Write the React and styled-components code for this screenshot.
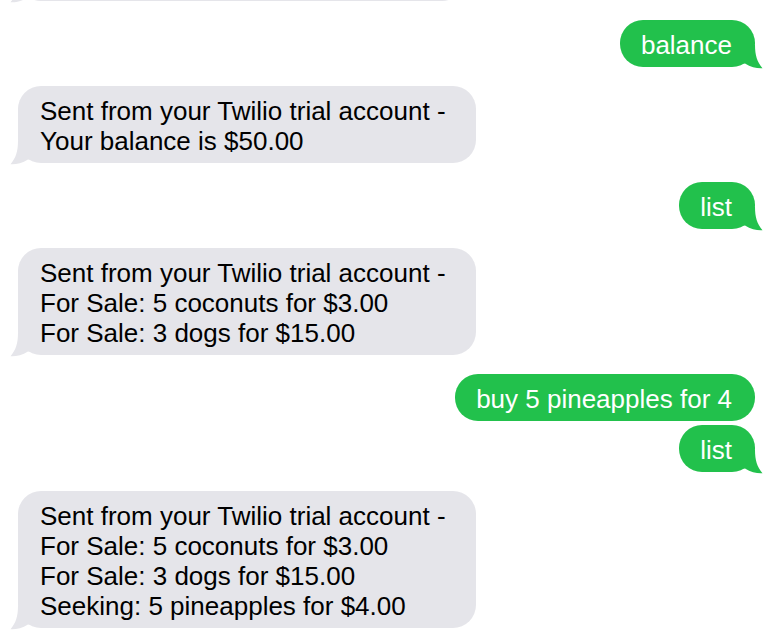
import React from "react";
import styled, { createGlobalStyle } from "styled-components";

const Global = createGlobalStyle`
  html, body { margin: 0; padding: 0; background: #ffffff; }
  body { width: 774px; height: 632px; overflow: hidden; }
`;

const Thread = styled.div`
  display: flex;
  flex-direction: column;
  margin-top: -59px;
  font-family: "Liberation Sans", Arial, Helvetica, sans-serif;
`;

const Row = styled.div`
  display: flex;
  justify-content: ${(p) => (p.$mine ? "flex-end" : "flex-start")};
  margin-top: ${(p) => p.$gap}px;
  padding: ${(p) => (p.$mine ? "0 19px 0 0" : "0 0 0 18px")};
`;

const Bubble = styled.div`
  position: relative;
  box-sizing: border-box;
  width: ${(p) => (p.$width ? `${p.$width}px` : "auto")};
  min-height: ${(p) => (p.$height ? `${p.$height}px` : "0")};
  background: ${(p) => (p.$mine ? "#22c14c" : "#e5e5ea")};
  color: ${(p) => (p.$mine ? "#ffffff" : "#000000")};
  font-size: 26px;
  line-height: 30px;
  padding: ${(p) => (p.$mine ? "10px 23px 7px 21px" : "10px 30px 7px 22px")};
  border-radius: 23px;
  white-space: nowrap;
`;

const TailSvg = styled.svg`
  position: absolute;
  bottom: -2px;
  ${(p) => (p.$mine ? "right: -8px;" : "left: -8px; transform: scaleX(-1);")}
  width: 24px;
  height: 24px;
  overflow: visible;
`;

function Tail({ mine }) {
  return (
    <TailSvg $mine={mine} viewBox="0 0 24 24" aria-hidden="true">
      <path
        d="M0 0 H16 C16 10 18 17 23.5 23.2 C18.5 23.6 12 22.2 6 18.4 L0 18.4 Z"
        fill={mine ? "#22c14c" : "#e5e5ea"}
      />
    </TailSvg>
  );
}

function Message({ mine, gap, tail = true, width, height, children }) {
  return (
    <Row $mine={mine} $gap={gap}>
      <Bubble $mine={mine} $width={width} $height={height}>
        {children}
        {tail && <Tail mine={mine} />}
      </Bubble>
    </Row>
  );
}

export default function App() {
  return (
    <>
      <Global />
      <Thread>
        <Message gap={0} width={447} height={60} />
        <Message mine gap={19}>balance</Message>
        <Message gap={19}>
          Sent from your Twilio trial account -<br />
          Your balance is $50.00
        </Message>
        <Message mine gap={19}>list</Message>
        <Message gap={19}>
          Sent from your Twilio trial account -<br />
          For Sale: 5 coconuts for $3.00<br />
          For Sale: 3 dogs for $15.00
        </Message>
        <Message mine gap={19} tail={false}>
          buy 5 pineapples for 4
        </Message>
        <Message mine gap={4}>list</Message>
        <Message gap={19}>
          Sent from your Twilio trial account -<br />
          For Sale: 5 coconuts for $3.00<br />
          For Sale: 3 dogs for $15.00<br />
          Seeking: 5 pineapples for $4.00
        </Message>
      </Thread>
    </>
  );
}
